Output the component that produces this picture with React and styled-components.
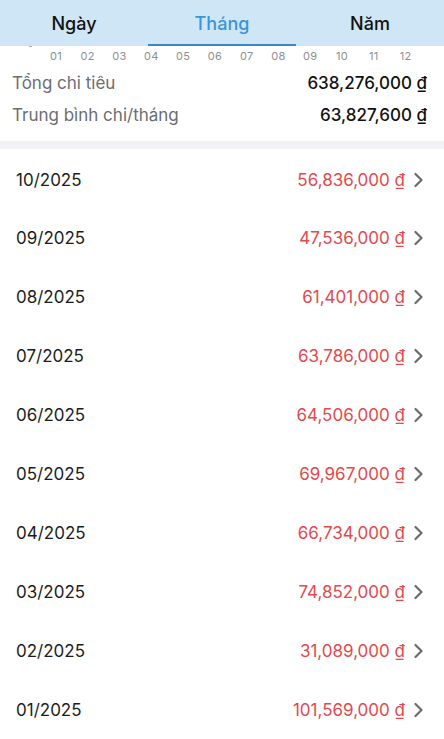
import React from "react";
import styled, { createGlobalStyle } from "styled-components";

const Global = createGlobalStyle`
  html, body { margin: 0; padding: 0; background: #fff; }
  body { font-family: Inter, "Noto Sans", sans-serif; -webkit-font-smoothing: antialiased; }
`;

const Page = styled.div`
  width: 444px;
  height: 739px;
  overflow: hidden;
  background: #fff;
  display: flex;
  flex-direction: column;
`;

const TabBar = styled.div`
  display: grid;
  grid-template-columns: repeat(3, 1fr);
  height: 47px;
  background: #cfe6f6;
`;

const Tab = styled.div`
  display: flex;
  align-items: center;
  justify-content: center;
  font-size: 18px;
  font-weight: 500;
  color: ${(p) => (p.$active ? "#3a95d6" : "#111")};
  border-bottom: 2px solid ${(p) => (p.$active ? "#3d87c2" : "transparent")};
  box-sizing: border-box;
  padding-top: 3px;
`;

const Axis = styled.div`
  position: relative;
  height: 19px;
  display: grid;
  grid-template-columns: repeat(12, 31.8px);
  padding-left: 40px;
  padding-top: 1px;
  align-items: center;
`;

const AxisDot = styled.span`
  position: absolute;
  left: 29px;
  top: 0;
  width: 3px;
  height: 1px;
  background: #b0b0b5;
`;

const AxisLabel = styled.span`
  font-size: 11px;
  color: #8e8e93;
  text-align: center;
  letter-spacing: 0.3px;
`;

const Summary = styled.div`
  display: flex;
  flex-direction: column;
  padding: 6px 17px 15px 12px;
  gap: 10px;
`;

const SummaryRow = styled.div`
  display: flex;
  justify-content: space-between;
  align-items: center;
  height: 22px;
`;

const SummaryLabel = styled.span`
  font-size: 17px;
  color: #6d6d72;
`;

const SummaryValue = styled.span`
  font-size: 17px;
  font-weight: 500;
  color: #111;
`;

const Divider = styled.div`
  height: 8px;
  background: #f2f2f6;
`;

const List = styled.div`
  display: flex;
  flex-direction: column;
  padding-top: 1.5px;
`;

const Row = styled.div`
  display: flex;
  align-items: center;
  justify-content: space-between;
  height: 58.9px;
  padding: 0 21px 0 16px;
`;

const Month = styled.span`
  font-size: 17px;
  color: #1c1c1e;
`;

const Right = styled.div`
  display: flex;
  align-items: center;
  gap: 8px;
`;

const Amount = styled.span`
  font-size: 17px;
  color: #e5484d;
`;

const Chevron = () => (
  <svg width="10" height="16" viewBox="0 0 10 16" fill="none">
    <path d="M2.5 2l6 6-6 6" stroke="#6c6c70" strokeWidth="2.2" strokeLinecap="round" strokeLinejoin="round" />
  </svg>
);

const months = [
  ["10/2025", "56,836,000"],
  ["09/2025", "47,536,000"],
  ["08/2025", "61,401,000"],
  ["07/2025", "63,786,000"],
  ["06/2025", "64,506,000"],
  ["05/2025", "69,967,000"],
  ["04/2025", "66,734,000"],
  ["03/2025", "74,852,000"],
  ["02/2025", "31,089,000"],
  ["01/2025", "101,569,000"],
];

export default function App() {
  return (
    <Page>
      <Global />
      <TabBar>
        <Tab>Ngày</Tab>
        <Tab $active>Tháng</Tab>
        <Tab>Năm</Tab>
      </TabBar>
      <Axis>
        <AxisDot />
        {["01", "02", "03", "04", "05", "06", "07", "08", "09", "10", "11", "12"].map((m) => (
          <AxisLabel key={m}>{m}</AxisLabel>
        ))}
      </Axis>
      <Summary>
        <SummaryRow>
          <SummaryLabel>Tổng chi tiêu</SummaryLabel>
          <SummaryValue>638,276,000 ₫</SummaryValue>
        </SummaryRow>
        <SummaryRow>
          <SummaryLabel>Trung bình chi/tháng</SummaryLabel>
          <SummaryValue>63,827,600 ₫</SummaryValue>
        </SummaryRow>
      </Summary>
      <Divider />
      <List>
        {months.map(([m, a]) => (
          <Row key={m}>
            <Month>{m}</Month>
            <Right>
              <Amount>{a} ₫</Amount>
              <Chevron />
            </Right>
          </Row>
        ))}
      </List>
    </Page>
  );
}
